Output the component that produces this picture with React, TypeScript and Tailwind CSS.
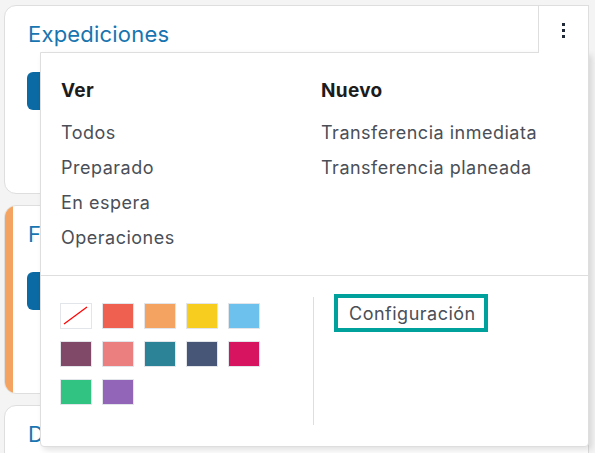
import React from 'react';

const swatches = [
  'none',
  '#f06050',
  '#f4a460',
  '#f7cd1f',
  '#6cc1ed',
  '#814968',
  '#eb7e7f',
  '#2c8397',
  '#475577',
  '#d6145f',
  '#30c381',
  '#9365b8',
];

function Card({ title, accent }: { title: string; accent?: boolean }) {
  return (
    <div className="relative h-[189px] shrink-0 overflow-hidden rounded-xl border border-[#dedede] bg-white">
      {accent && <div className="absolute left-0 top-0 bottom-0 w-[8px] bg-[#f4a460]" />}
      <div className="pl-[23px] pt-[14px] text-[22px] leading-[28px] tracking-[0.2px] text-[#1775b0]">{title}</div>
      <div className="ml-[22px] mt-[24px] h-[38px] w-[140px] rounded-md bg-[#0b6aa3]" />
    </div>
  );
}

export default function App() {
  return (
    <div
      className="h-[453px] w-[595px] overflow-hidden bg-[#f4f4f4] pl-[4px] pt-[5px]"
      style={{ fontFamily: 'Inter, "Noto Sans", sans-serif' }}
    >
      <div className="relative w-[585px]">
        <div className="flex flex-col gap-[11px]">
          <Card title="Expediciones" />
          <Card title="Fabricación" accent />
          <Card title="Dropship" />
        </div>

        {/* kebab toggle */}
        <div className="absolute right-0 top-0 z-20 flex h-[48px] w-[51px] items-start justify-center border-l border-t border-r border-[#dedede] bg-white pt-[17px]">
          <div className="flex flex-col gap-[3px]">
            <span className="block h-[3px] w-[3px] bg-[#1f2937]" />
            <span className="block h-[3px] w-[3px] bg-[#1f2937]" />
            <span className="block h-[3px] w-[3px] bg-[#1f2937]" />
          </div>
        </div>

        {/* dropdown */}
        <div className="absolute left-[36px] top-[47px] z-10 w-[549px] rounded-b-[4px] border border-[#dedede] bg-white shadow-[3px_3px_6px_rgba(0,0,0,0.12)]">
          <div className="flex h-[222px] pt-[24px]">
            <div className="w-[280px] pl-[20px]">
              <div className="h-[28px] text-[19px] font-bold leading-[28px] tracking-[0.3px] text-[#1c1c1c]">Ver</div>
              <div className="mt-[10px] flex flex-col text-[18px] tracking-[0.5px] text-[#4a4f57]">
                {['Todos', 'Preparado', 'En espera', 'Operaciones'].map((t) => (
                  <div key={t} className="h-[35px] leading-[35px]">
                    {t}
                  </div>
                ))}
              </div>
            </div>
            <div className="flex-1">
              <div className="h-[28px] text-[19px] font-bold leading-[28px] tracking-[0.3px] text-[#1c1c1c]">Nuevo</div>
              <div className="mt-[10px] flex flex-col text-[18px] tracking-[0.5px] text-[#4a4f57]">
                {['Transferencia inmediata', 'Transferencia planeada'].map((t) => (
                  <div key={t} className="h-[35px] leading-[35px]">
                    {t}
                  </div>
                ))}
              </div>
            </div>
          </div>
          <div className="flex h-[171px] border-t border-[#dedede] py-[21px]">
            <div className="w-[273px] border-r border-[#dedede] pl-[19px] pt-[6px]">
              <div className="grid grid-cols-[repeat(5,32px)] gap-x-[10px] gap-y-[12px]">
                {swatches.map((c, i) =>
                  c === 'none' ? (
                    <div key={i} className="relative h-[26px] w-[32px] border-[1.5px] border-[#e2e5ea] bg-white">
                      <svg className="absolute inset-0" width="29" height="23" viewBox="0 0 29 23">
                        <line x1="3" y1="20" x2="26" y2="3" stroke="#ff0000" strokeWidth="1.2" />
                      </svg>
                    </div>
                  ) : (
                    <div
                      key={i}
                      className="h-[26px] w-[32px] border-[1.5px] border-[#e2e5ea]"
                      style={{ backgroundColor: c }}
                    />
                  ),
                )}
              </div>
            </div>
            <div className="pl-[20px]">
              <div className="-mt-[3px] inline-flex h-[38px] items-center border-[4px] border-[#00a09d] pl-[11px] pr-[8px] text-[18px] tracking-[0.5px] text-[#4a4f57]">
                Configuración
              </div>
            </div>
          </div>
        </div>
      </div>
    </div>
  );
}
